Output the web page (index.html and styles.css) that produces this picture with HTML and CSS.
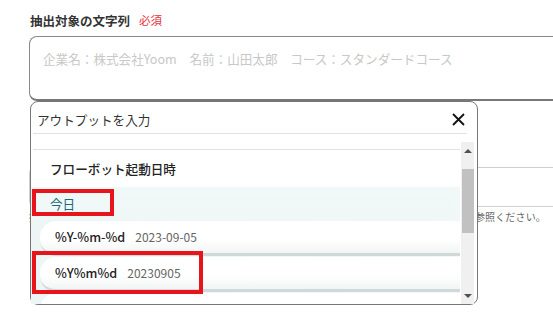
FILE: index.html
```html
<!DOCTYPE html>
<html lang="ja">
<head>
    <meta charset="UTF-8">
    <meta name="viewport" content="width=device-width, initial-scale=1.0">
    <title>抽出対象の文字列</title>
    <link rel="stylesheet" href="styles.css">
</head>
<body>
    <div class="form">
        <div class="label-row">
            <span class="label">抽出対象の文字列</span>
            <span class="required">必須</span>
        </div>
        <div class="textarea">
            <span class="placeholder">企業名：株式会社Yoom　名前：山田太郎　コース：スタンダードコース</span>
        </div>
        <div class="input"></div>
        <p class="helper">抽出した文字列の日付の形式や書式については、ヘルプページの「日付の変換方法」の各項目をご参照ください。</p>
        <div class="label-row next">
            <span class="label">抽出する項目</span>
        </div>
    </div>

    <!-- output picker -->
    <div class="modal">
        <div class="modal-header">
            <span class="modal-title">アウトプットを入力</span>
            <svg class="close" width="13" height="13" viewBox="0 0 13 13">
                <path d="M1 1 L12 12 M12 1 L1 12" stroke="#111" stroke-width="1.8" fill="none"/>
            </svg>
        </div>
        <div class="modal-body">
            <div class="list">
                <div class="list-top"></div>
                <div class="group-title">フローボット起動日時</div>
                <div class="section">
                    <div class="section-title">今日</div>
                    <div class="option"><span class="option-key">%Y-%m-%d</span><span class="option-value">2023-09-05</span></div>
                    <div class="option"><span class="option-key">%Y%m%d</span><span class="option-value">20230905</span></div>
                    <div class="option"></div>
                </div>
            </div>
            <div class="scrollbar">
                <div class="arrow-up"></div>
                <div class="thumb"></div>
                <div class="arrow-down"></div>
            </div>
        </div>
        <div class="mark mark-today"></div>
        <div class="mark mark-format"></div>
    </div>
</body>
</html>
```

FILE: styles.css
```css
* {
    margin: 0;
    padding: 0;
    box-sizing: border-box;
}
body {
    font-family: 'Noto Sans CJK JP', 'Noto Sans', sans-serif;
    background-color: #fff;
    color: #333;
    overflow: hidden;
    height: 316px;
}
.form {
    padding: 10px 0 0 29px;
    width: 620px;
}
.label-row {
    display: flex;
    align-items: center;
    gap: 9px;
    height: 20px;
    padding-left: 1px;
}
.label {
    font-size: 12.5px;
    font-weight: bold;
    color: #333;
}
.required {
    font-size: 11.5px;
    color: #e5323d;
}
.textarea {
    margin-top: 6px;
    height: 65px;
    border: 1px solid #888;
    border-bottom: 2px solid #777;
    border-radius: 8px;
    padding: 8px 13px;
}
.placeholder {
    font-size: 12.6px;
    color: #c8c8c8;
}
.input {
    margin-top: 66px;
    height: 40px;
    border: 1px solid #d0d0d0;
    border-radius: 6px;
}
.helper {
    margin-top: 2px;
    font-size: 10px;
    letter-spacing: 0.15px;
    line-height: 16px;
    color: #666;
    white-space: nowrap;
}
.label-row.next {
    margin-top: 86px;
}

/* modal */
.modal {
    position: absolute;
    left: 30px;
    top: 101px;
    width: 448px;
    height: 204px;
    background: #fff;
    border: 1px solid #777;
    border-radius: 8px;
    display: flex;
    flex-direction: column;
}
.modal-header {
    display: flex;
    align-items: center;
    justify-content: space-between;
    height: 32px;
    padding-top: 3px;
    margin: 0 10px 0 2px;
    border-bottom: 1px solid #e2e2e2;
}
.modal-title {
    font-size: 12.6px;
    color: #333;
    padding-left: 4px;
}
.close {
    margin-right: 2px;
}
.modal-body {
    display: flex;
    flex: 1;
    padding-top: 8px;
    overflow: hidden;
}
.list {
    flex: 1;
    overflow: hidden;
}
.list-top {
    height: 8px;
    margin-left: 2px;
    border-bottom: 1px solid #e2e2e2;
}
.group-title {
    height: 37px;
    display: flex;
    align-items: center;
    padding-left: 19px;
    font-size: 12.6px;
    font-weight: 500;
    color: #222;
}
.section {
    background: linear-gradient(to right, #eef5f5, #f2f8f8);
}
.section-title {
    height: 33px;
    display: flex;
    align-items: center;
    padding-left: 19px;
    margin-right: 5px;
    font-size: 12.6px;
    color: #1b6a7a;
    background: linear-gradient(#eff9f8, #f0f7f7);
    border-radius: 10px 10px 0 0;
}
.option {
    margin: 1px 0 0 9px;
    height: 35px;
    display: flex;
    align-items: center;
    padding: 0 0 1px 15px;
    background: linear-gradient(#fff 55%, #f3f5f5);
    border-bottom: 3px solid #cfd9d9;
    border-radius: 16px 0 0 16px;
}
.option-key {
    font-size: 12.6px;
    font-weight: 500;
    color: #222;
    margin-right: 10px;
}
.option-value {
    font-size: 12px;
    color: #666;
}
.scrollbar {
    width: 13px;
    margin: 0 3px 0 1px;
    background: #f0f0f0;
    display: flex;
    flex-direction: column;
    align-items: center;
}
.arrow-up {
    margin-top: 7px;
    border-left: 4px solid transparent;
    border-right: 4px solid transparent;
    border-bottom: 4px solid #505050;
}
.thumb {
    margin-top: 16px;
    width: 12px;
    height: 64px;
    background: #c1c1c1;
}
.arrow-down {
    margin-top: auto;
    margin-bottom: 6px;
    border-left: 4px solid transparent;
    border-right: 4px solid transparent;
    border-top: 4px solid #505050;
}

/* red highlight marks */
.mark {
    position: absolute;
    left: 1px;
    border: 4px solid #e8141c;
}
.mark-today {
    top: 87px;
    width: 82px;
    height: 27px;
}
.mark-format {
    top: 149px;
    width: 171px;
    height: 43px;
}
```
